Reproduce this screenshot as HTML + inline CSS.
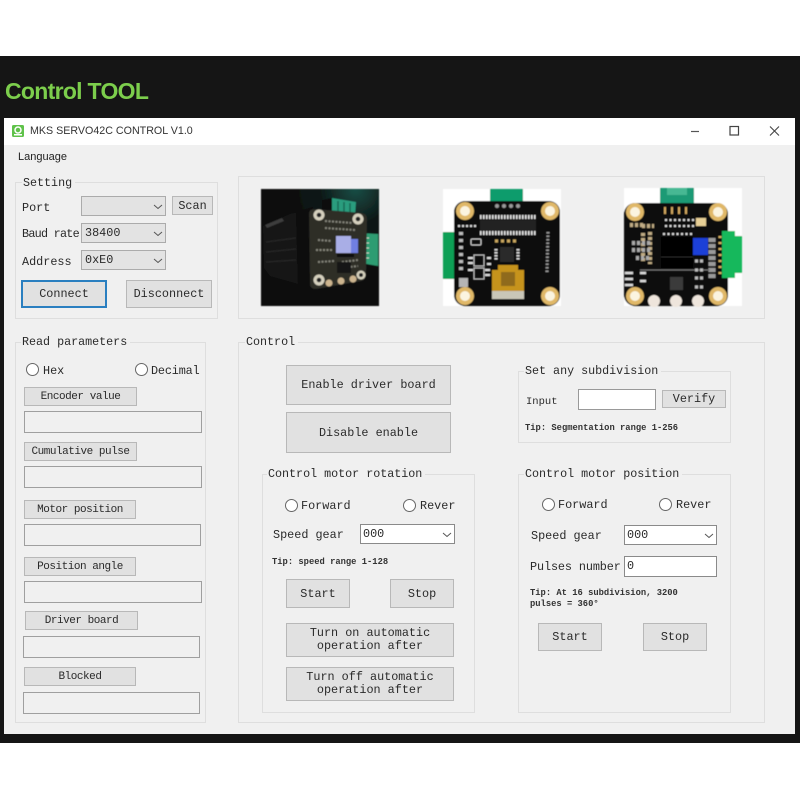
<!DOCTYPE html>
<html><head><meta charset="utf-8"><title>MKS SERVO42C CONTROL</title>
<style>
html,body{margin:0;padding:0;background:#fff;width:800px;height:800px;overflow:hidden}
#p{position:relative;width:800px;height:800px;overflow:hidden;font-family:"Liberation Mono","Noto Sans CJK SC",monospace;font-size:11.8px;color:#2a2a2a;filter:blur(.3px)}
#p div{position:absolute;box-sizing:border-box}
.t{white-space:nowrap;line-height:14px;height:14px;padding-top:1px}
.s{font-size:8.8px;font-weight:bold;line-height:11px;height:11px;color:#333;white-space:nowrap;padding-top:1px}
.g{border:1px solid #dedede}
.l{background:#f0f0f0;padding:0 3px 0 1px;white-space:nowrap;line-height:14px;height:14px;font-size:11.7px}
.b{background:#e1e1e1;border:1px solid #b8b8b8;display:flex;align-items:center;justify-content:center;text-align:center;line-height:13px;white-space:pre;padding-top:1px}
.n{padding-top:0}
.f{font-size:11px;letter-spacing:-.47px}
.i{background:#f0f0f0;border:1px solid #9f9f9f;line-height:18px;padding-left:2px}
.w{background:#fff;border:1px solid #8a8a8a;line-height:19px;padding-left:2px}
.c{background:#e3e3e3;border:1px solid #ababab;line-height:19px;padding-left:3px}
.r{width:13px;height:13px;border-radius:50%;border:1px solid #666;background:#fff}
</style></head><body><div id="p">
<div style="left:0;top:56px;width:800px;height:687px;background:#151515"></div>
<div style="left:5px;top:78px;font:bold 23px/26px 'Liberation Sans',sans-serif;letter-spacing:-.7px;color:#7cce4c;white-space:nowrap">Control TOOL</div>
<div style="left:4px;top:118px;width:791px;height:616px;background:#f0f0f0"></div>
<div style="left:4px;top:118px;width:791px;height:27px;background:#fff"></div>
<div style="left:30px;top:124px;font:10.7px/14px 'Liberation Sans',sans-serif;color:#333;white-space:nowrap">MKS SERVO42C CONTROL V1.0</div>
<div style="left:18px;top:150px;font:11px/14px 'Liberation Sans',sans-serif;color:#222;white-space:nowrap">Language</div>

<!-- Setting -->
<div class="g" style="left:15px;top:182px;width:203px;height:137px"></div>
<div class="l" style="left:22px;top:176px">Setting</div>
<div class="t" style="left:22px;top:200px">Port</div>
<div class="c" style="left:81px;top:196px;width:85px;height:20px"></div>
<div class="b" style="left:172px;top:196px;width:41px;height:19px">Scan</div>
<div class="t" style="left:22px;top:226px;letter-spacing:-.75px">Baud rate</div>
<div class="c" style="left:81px;top:223px;width:85px;height:20px">38400</div>
<div class="t" style="left:22px;top:254px">Address</div>
<div class="c" style="left:81px;top:250px;width:85px;height:20px">0xE0</div>
<div class="b" style="left:21px;top:280px;width:86px;height:28px;border:2px solid #2a7fc0">Connect</div>
<div class="b" style="left:126px;top:280px;width:86px;height:28px">Disconnect</div>

<!-- Images panel -->
<div class="g" style="left:238px;top:176px;width:527px;height:143px"></div>

<!-- Read parameters -->
<div class="g" style="left:15px;top:342px;width:191px;height:381px"></div>
<div class="l" style="left:21px;top:335px">Read parameters</div>
<div class="r" style="left:26px;top:363px"></div><div class="t" style="left:43px;top:363px">Hex</div>
<div class="r" style="left:135px;top:363px"></div><div class="t" style="left:151px;top:363px;letter-spacing:-.15px">Decimal</div>
<div class="b f" style="left:24px;top:387px;width:113px;height:19px">Encoder value</div>
<div class="i" style="left:24px;top:411px;width:178px;height:22px"></div>
<div class="b f" style="left:24px;top:442px;width:113px;height:19px">Cumulative pulse</div>
<div class="i" style="left:24px;top:466px;width:178px;height:22px"></div>
<div class="b f" style="left:24px;top:500px;width:112px;height:19px">Motor position</div>
<div class="i" style="left:24px;top:524px;width:177px;height:22px"></div>
<div class="b f" style="left:24px;top:557px;width:112px;height:19px">Position angle</div>
<div class="i" style="left:24px;top:581px;width:178px;height:22px"></div>
<div class="b f" style="left:25px;top:611px;width:113px;height:19px">Driver board</div>
<div class="i" style="left:23px;top:636px;width:177px;height:22px"></div>
<div class="b f" style="left:24px;top:667px;width:112px;height:19px">Blocked</div>
<div class="i" style="left:23px;top:692px;width:177px;height:22px"></div>

<!-- Control -->
<div class="g" style="left:238px;top:342px;width:527px;height:381px"></div>
<div class="l" style="left:245px;top:335px">Control</div>
<div class="b" style="left:286px;top:365px;width:165px;height:40px">Enable driver board</div>
<div class="b" style="left:286px;top:412px;width:165px;height:41px">Disable enable</div>

<div class="g" style="left:262px;top:474px;width:213px;height:239px"></div>
<div class="l" style="left:267px;top:467px">Control motor rotation</div>
<div class="r" style="left:285px;top:499px"></div><div class="t" style="left:301px;top:498px">Forward</div>
<div class="r" style="left:403px;top:499px"></div><div class="t" style="left:420px;top:498px">Rever</div>
<div class="t" style="left:273px;top:527px">Speed gear</div>
<div class="w" style="left:360px;top:524px;width:95px;height:20px">000</div>
<div class="s" style="left:272px;top:556px">Tip: speed range 1-128</div>
<div class="b" style="left:286px;top:579px;width:64px;height:29px">Start</div>
<div class="b" style="left:390px;top:579px;width:64px;height:29px">Stop</div>
<div class="b n" style="left:286px;top:623px;width:168px;height:34px">Turn on automatic
operation after</div>
<div class="b n" style="left:286px;top:667px;width:168px;height:34px">Turn off automatic
operation after</div>

<div class="g" style="left:518px;top:371px;width:213px;height:72px"></div>
<div class="l" style="left:524px;top:364px">Set any subdivision</div>
<div class="t" style="left:526px;top:394px;font-size:10.5px">Input</div>
<div class="w" style="left:578px;top:389px;width:78px;height:21px;border-color:#999"></div>
<div class="b" style="left:662px;top:390px;width:64px;height:18px">Verify</div>
<div class="s" style="left:525px;top:422px">Tip: Segmentation range 1-256</div>

<div class="g" style="left:518px;top:474px;width:213px;height:239px"></div>
<div class="l" style="left:524px;top:467px">Control motor position</div>
<div class="r" style="left:542px;top:498px"></div><div class="t" style="left:558px;top:497px">Forward</div>
<div class="r" style="left:659px;top:498px"></div><div class="t" style="left:676px;top:497px">Rever</div>
<div class="t" style="left:531px;top:528px">Speed gear</div>
<div class="w" style="left:624px;top:525px;width:93px;height:20px">000</div>
<div class="t" style="left:530px;top:559px;letter-spacing:-.1px">Pulses number</div>
<div class="w" style="left:624px;top:556px;width:93px;height:21px">0</div>
<div class="s" style="left:530px;top:587px">Tip: At 16 subdivision, 3200</div>
<div class="s" style="left:530px;top:598px">pulses = 360°</div>
<div class="b" style="left:538px;top:623px;width:64px;height:28px">Start</div>
<div class="b" style="left:643px;top:623px;width:64px;height:28px">Stop</div>

<svg style="position:absolute;left:0;top:0" width="800" height="800" viewBox="0 0 800 800">
<defs>
<radialGradient id="gl" cx="0.8" cy="0" r="0.6"><stop offset="0" stop-color="#174e46"/><stop offset=".5" stop-color="#0f1817"/><stop offset="1" stop-color="#0b0d0d"/></radialGradient>
<filter id="bl" x="-5%" y="-5%" width="110%" height="110%"><feGaussianBlur stdDeviation="0.5"/></filter>
</defs>
<!-- app icon -->
<rect x="12" y="125" width="12" height="12" rx="1.5" fill="#5fc24a"/>
<circle cx="18" cy="130" r="3" fill="none" stroke="#fff" stroke-width="1.5"/>
<rect x="14" y="134" width="8" height="1.5" fill="#fff"/>
<!-- window controls -->
<path d="M691 131.5H699" stroke="#555" stroke-width="1.2"/>
<rect x="730" y="126.5" width="8.5" height="8.5" fill="none" stroke="#444" stroke-width="1.2"/>
<path d="M770 126.5L779 135.5M779 126.5L770 135.5" stroke="#444" stroke-width="1.1"/>
<!-- chevrons -->
<g fill="none" stroke="#555" stroke-width="1">
<path d="M154 205l4 3.5 4-3.5M154 232l4 3.5 4-3.5M154 259l4 3.5 4-3.5M443 533l4 3.5 4-3.5M705 534l4 3.5 4-3.5"/>
</g>
<!-- Image 1 -->
<g filter="url(#bl)">
<rect x="261" y="189" width="118" height="117" fill="url(#gl)"/>
<path d="M263 226L290 214L300 212L302 285L270 276L264 268Z" fill="#161616"/>
<path d="M265 225L282 218L284 221L267 228Z" fill="#3c3c3c"/>
<path d="M266 242L296 238M266 252L296 249M266 262L296 260" stroke="#202020" stroke-width="2"/>
<path d="M296 212L313 207L316 291L298 287Z" fill="#070707"/>
<path d="M322 200L332 198L332 214L322 213Z" fill="#111"/>
<path d="M332 198L356 202L355 216L332 214Z" fill="#2a9d7e"/>
<path d="M338 201v13M344 202v13M350 203v13" stroke="#146a55" stroke-width="1.5"/>
<path d="M360 233L378 234L378 266L361 263Z" fill="#2f9c72"/>
<path d="M361 238h8M361 243h8M361 248h8M361 253h8M361 258h8" stroke="#cfd8c8" stroke-width="1"/>
<path d="M314 209L362 213Q367 214 367 219L366 275Q366 280 361 281L316 289Q310 289 310 284L309 214Q309 209 314 209Z" fill="#2d2d28"/>
<path d="M325 221l28 2M325 228l30 2M318 240l14 1M316 250l16 0M318 262l16 -1M342 262l16 -2M340 268l18 -2" stroke="#85857a" stroke-width="2" stroke-dasharray="2 1.5"/>
<rect x="336" y="236" width="15" height="17" fill="#a9aee6"/>
<rect x="351" y="239" width="7" height="14" fill="#6f7fe0"/>
<rect x="337" y="254" width="17" height="3" fill="#0b0b0b"/>
<rect x="337" y="262" width="14" height="11" fill="#141414"/>
<g fill="#d5d0bd"><circle cx="319" cy="215" r="5.5"/><circle cx="358" cy="219" r="5.5"/><circle cx="319" cy="280" r="5.5"/><circle cx="361" cy="275" r="4.5"/></g>
<g fill="#cdb58f"><circle cx="329" cy="283" r="3.5"/><circle cx="341" cy="281" r="3.5"/><circle cx="353" cy="279" r="3.5"/></g>
<g fill="#222"><circle cx="319" cy="215" r="2.3"/><circle cx="358" cy="219" r="2.3"/><circle cx="319" cy="280" r="2.3"/><circle cx="361" cy="275" r="2"/></g>
</g>
<!-- Image 2 -->
<g filter="url(#bl)">
<rect x="443" y="189" width="118" height="117" fill="#fff"/>
<rect x="490" y="189" width="33" height="13" fill="#0b9c6c"/>
<rect x="443" y="232" width="12" height="47" fill="#0a9f54"/>
<rect x="454" y="201" width="106" height="105" rx="11" fill="#0d0d0d"/>
<g fill="#999"><circle cx="497" cy="206" r="2"/><circle cx="504" cy="206" r="2"/><circle cx="511" cy="206" r="2"/><circle cx="518" cy="206" r="2"/></g>
<path d="M480 217H536M480 233H536" stroke="#e6e6e6" stroke-width="4" stroke-dasharray="1.5 1.5"/>
<rect x="480" y="220" width="56" height="11" fill="#222"/>
<path d="M461 232v38" stroke="#bbb" stroke-width="4" stroke-dasharray="3 4"/>
<path d="M458 226h20" stroke="#ddd" stroke-width="2" stroke-dasharray="2 2"/>
<rect x="471" y="239" width="10" height="6" rx="1" fill="#111" stroke="#ccc"/>
<path d="M495 241h24" stroke="#c9a75e" stroke-width="3" stroke-dasharray="3 3"/>
<rect x="500" y="247" width="14" height="15" fill="#2a2a2a"/>
<path d="M496 249v12M518 249v12" stroke="#ddd" stroke-width="3" stroke-dasharray="1.5 1.5"/>
<rect x="474" y="255" width="10" height="11" fill="#111" stroke="#bbb"/>
<rect x="474" y="268" width="10" height="11" fill="#111" stroke="#bbb"/>
<path d="M468 258h5M468 263h5M468 270h5M485 270h5M485 275h5M487 258h4M487 264h4" stroke="#ddd" stroke-width="2"/>
<rect x="459" y="278" width="9" height="9" fill="#b5b5b5"/>
<path d="M548 232l-1 40" stroke="#999" stroke-width="3" stroke-dasharray="1.5 2"/>
<rect x="492" y="270" width="32" height="23" fill="#c6931d"/>
<path d="M498 270v-5h20v5" fill="#c6931d"/>
<rect x="501" y="272" width="14" height="14" fill="#8f6a1a"/>
<rect x="492" y="291" width="32" height="8" fill="#c9c6b8"/>
<g fill="#e0b868"><circle cx="465" cy="211" r="9"/><circle cx="550" cy="211" r="9"/><circle cx="465" cy="296" r="9"/><circle cx="550" cy="296" r="9"/></g>
<g fill="#fbf4e0"><circle cx="465" cy="211" r="5"/><circle cx="550" cy="211" r="5"/><circle cx="465" cy="296" r="5"/><circle cx="550" cy="296" r="5"/></g>
</g>
<!-- Image 3 -->
<g filter="url(#bl)">
<rect x="624" y="188" width="118" height="118" fill="#fff"/>
<rect x="660" y="188" width="34" height="19" fill="#1d9a74"/>
<path d="M667 188v7h20v-7" fill="#46b893"/>
<rect x="624" y="203" width="104" height="103" rx="11" fill="#0e0e0e"/>
<path d="M665 207v7M672 207v7M679 207v7M686 207v7" stroke="#d2a85e" stroke-width="2"/>
<rect x="722" y="231" width="20" height="47" fill="#12b85c"/>
<rect x="735" y="231" width="7" height="5" fill="#fff"/><rect x="735" y="273" width="7" height="5" fill="#fff"/>
<path d="M720 236v40" stroke="#d4b060" stroke-width="3" stroke-dasharray="2 4"/>
<path d="M712 238v42" stroke="#9a9a9a" stroke-width="7" stroke-dasharray="4 2"/>
<path d="M665 220h30M665 226h30M663 234h30" stroke="#ddd" stroke-width="2" stroke-dasharray="2 2.5"/>
<rect x="696" y="218" width="10" height="8" fill="#e7cf96"/>
<rect x="661" y="237" width="32" height="31" fill="#050505"/>
<path d="M661 257h32" stroke="#2a2a2a"/>
<rect x="693" y="238" width="15" height="17" fill="#1f3fd8"/>
<path d="M630 225h14M642 226h12M650 232v32M643 233v28" stroke="#c0ab84" stroke-width="4" stroke-dasharray="3 2"/>
<path d="M632 243h20M632 250h20M636 258h14" stroke="#aaa" stroke-width="4" stroke-dasharray="3 2"/>
<path d="M640 270h70" stroke="#777"/>
<path d="M625 273h8M625 279h8M625 285h8M640 273h6M640 281h6" stroke="#ddd" stroke-width="2.5"/>
<rect x="670" y="277" width="13" height="13" fill="#3a3a3a"/>
<path d="M695 261h10M695 270h10M695 278h10M695 287h10" stroke="#bbb" stroke-width="3" stroke-dasharray="3 2"/>
<g fill="#e0b868"><circle cx="635" cy="212" r="9"/><circle cx="718" cy="212" r="9"/><circle cx="635" cy="296" r="9"/><circle cx="718" cy="296" r="9"/></g>
<g fill="#fbf4e0"><circle cx="635" cy="212" r="5"/><circle cx="718" cy="212" r="5"/><circle cx="635" cy="296" r="5"/><circle cx="718" cy="296" r="5"/></g>
<g fill="#eee5dc"><circle cx="654" cy="301" r="6"/><circle cx="676" cy="301" r="6"/><circle cx="698" cy="301" r="6"/></g>
</g>
</svg>
</div></body></html>
